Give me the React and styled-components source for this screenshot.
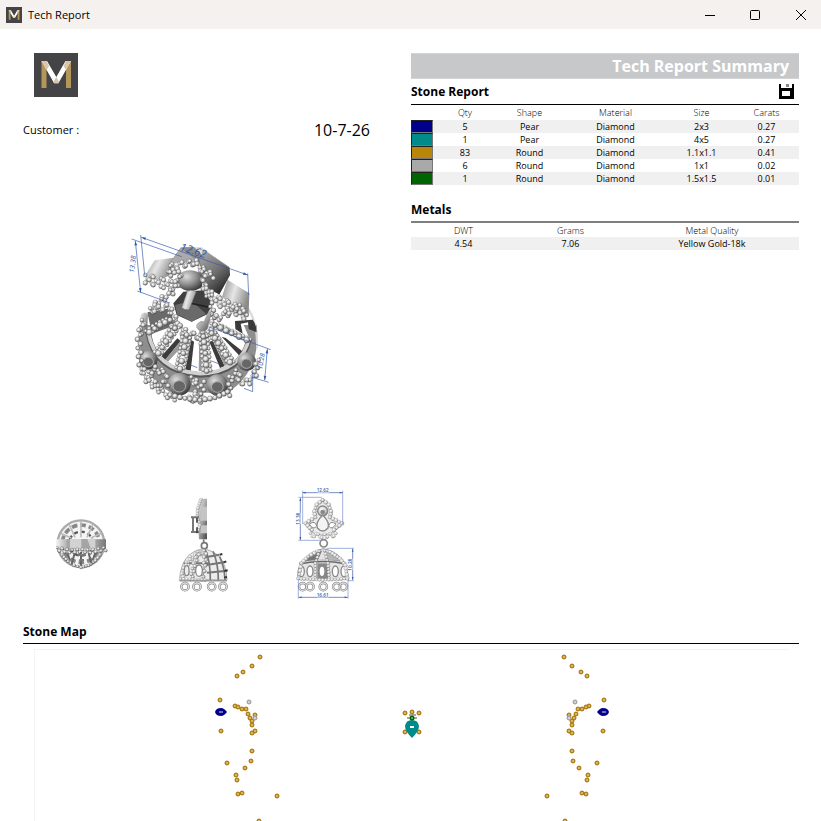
import React from 'react';
import styled, { createGlobalStyle } from 'styled-components';

const GlobalStyle = createGlobalStyle`
    * {
        box-sizing: border-box;
    }

    body {
        margin: 0;
        background: #fff;
        color: #000;
        font-family: 'Open Sans', 'Noto Sans', sans-serif;
        font-size: 11px;
    }
`;

const Window = styled.div`
    display: flex;
    flex-flow: column;
    height: 100vh;
    overflow: hidden;
`;

const TitleBar = styled.header`
    display: flex;
    align-items: center;
    flex: none;
    height: 29px;
    padding-left: 6px;
    background: #f5f1ee;
`;

const Title = styled.span`
    flex: 1;
    margin-left: 6px;
    font-size: 11px;
    line-height: 16px;
`;

const WindowButton = styled.button`
    display: flex;
    align-items: center;
    justify-content: center;
    width: 45px;
    height: 28px;
    padding: 0;
    border: 0;
    background: none;

    &:last-child {
        width: 44px;
        padding-left: 4px;
    }
`;

const Page = styled.main`
    flex: 1;
    min-height: 0;
    overflow: hidden;
    padding: 24px 22px 0 23px;
`;

const Columns = styled.div`
    display: grid;
    grid-template-columns: 1fr 1fr;
`;

const Details = styled.section`
    display: flex;
    flex-flow: column;
    padding-right: 24px;
`;

const LogoHolder = styled.div`
    display: flex;
    padding-left: 11px;
`;

const CustomerRow = styled.div`
    display: flex;
    justify-content: space-between;
    align-items: center;
    margin-top: 22px;
    padding-right: 17px;
    line-height: 22px;
`;

const OrderDate = styled.time`
    font-size: 16px;
`;

const MainView = styled.div`
    display: flex;
    justify-content: center;
    margin-top: 84px;
    padding-right: 10px;
`;

const Thumbs = styled.div`
    display: grid;
    grid-template-columns: repeat(3, 1fr);
    justify-items: center;
    margin-top: 65px;
    padding-right: 2px;
`;

const Summary = styled.section`
    display: flex;
    flex-flow: column;
`;

const Banner = styled.h1`
    margin: 0;
    padding-right: 10px;
    border: 1px solid #d3d4d6;
    border-width: 1px 0;
    background: #c7c8ca;
    color: #fff;
    font-size: 16px;
    line-height: 24px;
    text-align: right;
`;

const SectionHead = styled.div`
    display: flex;
    justify-content: space-between;
    align-items: center;
    height: ${({ $height }) => $height || 26}px;
    padding-right: 5px;
    border-bottom: ${({ $rule }) => $rule || '1px solid #000'};
`;

const Heading = styled.h2`
    margin: 0;
    font-size: 12px;
    line-height: 18px;
`;

const SaveButton = styled.button`
    display: flex;
    padding: 0;
    border: 0;
    background: none;
`;

const Table = styled.table`
    width: 100%;
    margin-bottom: ${({ $gap }) => $gap || 0}px;
    border-collapse: collapse;
    table-layout: fixed;
    font-size: 9px;
    line-height: 13px;
    text-align: center;

    th,
    td {
        height: 13px;
        padding: 0;
    }

    th {
        height: ${({ $head }) => $head || 14}px;
        font-weight: 300;
    }

    tbody tr:nth-child(odd) {
        background: #f0f0f0;
    }
`;

const Swatch = styled.div`
    height: 13px;
    border: 1px solid #222;
    border-right-color: #777;
    border-bottom-color: #777;
    background: ${({ $color }) => $color};
`;

const MapSection = styled.section`
    margin-top: 10px;
`;

const MapFrame = styled.div`
    margin: 5px 10px 0 11px;
    border: 1px solid #f4f4f4;
    border-width: 1px 0 0 1px;

    svg {
        display: block;
        width: 100%;
    }
`;

const SharedDefs = styled.svg`
    position: absolute;
    width: 0;
    height: 0;
`;

const BLUE = '#3557a8';

const stones = [
    { color: '#00008b', qty: 5, shape: 'Pear', material: 'Diamond', size: '2x3', carats: '0.27' },
    { color: '#008b8b', qty: 1, shape: 'Pear', material: 'Diamond', size: '4x5', carats: '0.27' },
    { color: '#b8860b', qty: 83, shape: 'Round', material: 'Diamond', size: '1.1x1.1', carats: '0.41' },
    { color: '#a9a9a9', qty: 6, shape: 'Round', material: 'Diamond', size: '1x1', carats: '0.02' },
    { color: '#006400', qty: 1, shape: 'Round', material: 'Diamond', size: '1.5x1.5', carats: '0.01' },
];

const metals = [{ dwt: '4.54', grams: '7.06', quality: 'Yellow Gold-18k' }];

const goldStones = [
    [225, 8], [217, 17], [208, 23], [202, 27], [185, 51], [200, 57], [203, 58], [207, 60], [211, 60],
    [213, 65], [215, 69], [220, 66], [217, 72], [217, 76], [220, 82], [217, 84], [186, 82], [217, 102],
    [216, 112], [210, 119], [192, 114], [201, 126], [202, 131], [203, 145], [207, 144], [242, 147], [224, 172],
];

const greyStones = [[214, 53], [220, 69]];

// points spread evenly along a polyline
const spread = (points, step) => {
    const out = [];
    for (let i = 0; i < points.length - 1; i++) {
        const [x1, y1] = points[i];
        const [x2, y2] = points[i + 1];
        const count = Math.max(1, Math.round(Math.hypot(x2 - x1, y2 - y1) / step));
        for (let k = 0; k < count; k++) {
            out.push([x1 + ((x2 - x1) * k) / count, y1 + ((y2 - y1) * k) / count]);
        }
    }
    out.push(points[points.length - 1]);
    return out;
};

const Beads = ({ points, r = 6, step = 12, rows = 1, fill = 'url(#bead)', edge = '#5a5a5a' }) => (
    <g fill={fill} stroke={edge} strokeWidth={r / 7}>
        {spread(points, step).map(([x, y], i) => (
            <React.Fragment key={i}>
                {Array.from({ length: rows }, (_, n) => (
                    <circle
                        key={n}
                        cx={x + ((i + n) % 2 ? r * 0.6 : -r * 0.6) * (rows > 1 ? 1 : 0)}
                        cy={y + n * r * 1.7}
                        r={(i + n) % 3 ? r : r * 0.85}
                    />
                ))}
            </React.Fragment>
        ))}
    </g>
);

const PaleBeads = (props) => <Beads fill="url(#paleBead)" edge="#999" {...props} />;

const Logo = ({ size }) => (
    <svg width={size} height={size} viewBox="0 0 44 44" role="img" aria-label="M">
        <rect width="44" height="44" fill="#444446" />
        <path d="M7.5 8h5v27h-5zM32 8h5v27h-5z" fill="#b5965a" />
        <path d="M7.5 8h5.5l9.3 16L31.500 8H37L24.500 30h-4.500z" fill="#fff" />
        <path d="M7.500 8h5l2.500 5-2.500 4zM37 8h-5l-2.500 5 2.500 4zM22.300 24l3 5-1 1.500h-4l-1-1.500z" fill="#d9c5ad" />
    </svg>
);

const Arrow = ({ x1, y1, x2, y2, size = 9 }) => {
    const angle = Math.atan2(y2 - y1, x2 - x1);
    const head = (x, y, dir) => {
        const a = angle + (dir < 0 ? Math.PI : 0);
        const bx = x - Math.cos(a) * size * 1.5;
        const by = y - Math.sin(a) * size * 1.5;
        const ox = Math.sin(a) * size * 0.45;
        const oy = Math.cos(a) * size * 0.45;
        return `M${x} ${y}L${bx + ox} ${by - oy}L${bx - ox} ${by + oy}z`;
    };
    return (
        <g>
            <path d={`M${x1} ${y1}L${x2} ${y2}`} stroke={BLUE} strokeWidth="2" />
            <path d={head(x2, y2, 1) + head(x1, y1, -1)} fill={BLUE} />
        </g>
    );
};

const Gradients = () => (
    <SharedDefs aria-hidden="true">
        <defs>
            <radialGradient id="bead" cx="0.4" cy="0.34" r="0.7">
                <stop offset="0" stopColor="#fff" />
                <stop offset="0.45" stopColor="#d2d2d2" />
                <stop offset="1" stopColor="#484848" />
            </radialGradient>
            <radialGradient id="paleBead" cx="0.4" cy="0.35" r="0.7">
                <stop offset="0" stopColor="#fff" />
                <stop offset="0.6" stopColor="#d0d0d0" />
                <stop offset="1" stopColor="#777" />
            </radialGradient>
            <radialGradient id="darkBall" cx="0.35" cy="0.3" r="0.8">
                <stop offset="0" stopColor="#ddd" />
                <stop offset="0.5" stopColor="#8c8c8c" />
                <stop offset="1" stopColor="#2a2a2a" />
            </radialGradient>
            <linearGradient id="metal" x1="0" y1="0" x2="1" y2="1">
                <stop offset="0" stopColor="#efefef" />
                <stop offset="0.5" stopColor="#a8a8a8" />
                <stop offset="1" stopColor="#444" />
            </linearGradient>
            <linearGradient id="plate" x1="0" y1="0" x2="1" y2="0.4">
                <stop offset="0" stopColor="#8a8a8a" />
                <stop offset="0.5" stopColor="#e6e6e6" />
                <stop offset="1" stopColor="#8a8a8a" />
            </linearGradient>
            <linearGradient id="shade" x1="0" y1="0" x2="0.6" y2="1">
                <stop offset="0" stopColor="#b0b0b0" />
                <stop offset="0.6" stopColor="#707070" />
                <stop offset="1" stopColor="#2c2c2c" />
            </linearGradient>
            <linearGradient id="band" x1="0" y1="0" x2="1" y2="0">
                <stop offset="0" stopColor="#f5f5f5" />
                <stop offset="0.3" stopColor="#999" />
                <stop offset="0.6" stopColor="#ccc" />
                <stop offset="1" stopColor="#777" />
            </linearGradient>
        </defs>
    </SharedDefs>
);

const spokes = [
    [[150, 285], [120, 300], [88, 322]],
    [[165, 310], [138, 350], [115, 385]],
    [[200, 330], [190, 385], [180, 432]],
    [[250, 335], [256, 385], [260, 438]],
    [[275, 325], [305, 370], [330, 412]],
    [[285, 300], [335, 325], [380, 345]],
];

const PerspectiveView = () => (
    <svg width="160" height="190" viewBox="0 0 480 570" fill="none" role="img" aria-label="Perspective view">
        <path d="M58 300Q48 450 150 500L320 505Q425 440 410 300z" fill="#8e8e8e" />
        <path d="M84 335Q110 445 240 452Q360 448 388 340L350 250L110 250z" fill="#fff" />
        <path d="M384 250Q412 290 411 370" stroke="#d8d8d8" strokeWidth="6" />
        <path d="M345 288L398 284Q410 300 410 322L386 312L384 292L362 296L368 326L346 312z" fill="#3a3a3a" />
        <path d="M82 262l70-12 10 52-66 24z" fill="#6a6a6a" />
        <path d="M62 270q14-15 22 0l-4 60q-25-20-18-60z" fill="url(#metal)" />

        <g fill="#3c3c3c">
            <path d="M172 340l10 8-46 56-12-10z" />
            <path d="M214 345l8 5-10 88-16-4z" />
            <path d="M268 350l10-3 36 76-14 6z" />
            <path d="M305 335l12 4 50 40-8 14z" />
        </g>
        <g fill="#9a9a9a">
            <path d="M182 348l-46 56 8 6 46-50z" />
            <path d="M238 348h7v90h-9z" />
            <path d="M280 347l34 76 10-6z" />
        </g>
        <path d="M85 325Q105 440 240 450Q365 445 388 340" stroke="#585858" strokeWidth="16" />
        <path d="M85 322Q105 436 240 446Q365 441 388 337" stroke="#d0d0d0" strokeWidth="11" />

        <path d="M75 152L104 106L160 98L150 150L120 165z" fill="url(#plate)" />
        <path d="M148 116L182 68L240 66L328 126L330 150L298 208L262 190L236 108z" fill="#777" />
        <path d="M148 116L182 68L222 66L236 108z" fill="#aaa" />
        <path d="M182 68L222 66L262 106L232 108z" fill="#8c8c8c" />
        <path d="M222 66L244 66L328 128L262 106z" fill="#e0e0e0" />
        <path d="M248 72L328 128L330 150L298 208L262 190L240 112z" fill="url(#shade)" />
        <path d="M322 164L388 205L386 268L370 275L306 215z" fill="url(#plate)" />

        <path d="M160 235L190 200L250 196L278 238L262 268L215 290L170 270z" fill="#404040" />
        <path d="M165 240L215 228L258 266L215 290L172 268z" fill="#6a6a6a" />
        <path d="M200 232L264 246" stroke="#222" strokeWidth="5" />
        <path d="M172 150q36-28 78 0l-4 36q-40 26-72-4z" fill="url(#darkBall)" />
        <path d="M202 198q14-6 27 2l-22 54q-12 2-22-6z" fill="url(#plate)" stroke="#555" />

        <Beads points={[[80, 150], [104, 156], [135, 165], [160, 170]]} rows={3} r={7} step={13} />
        <Beads points={[[148, 140], [160, 118], [190, 112], [225, 106], [246, 126], [276, 148]]} rows={2} r={7} step={13} />
        <Beads points={[[155, 122], [180, 140], [170, 170], [155, 195], [130, 215], [100, 240]]} rows={2} r={7} step={13} />
        <Beads points={[[250, 140], [255, 180], [280, 210], [330, 232], [376, 258]]} rows={3} r={7} step={13} />
        <Beads points={[[95, 250], [145, 240], [158, 265], [170, 285]]} rows={2} r={7} step={13} />
        <Beads points={[[275, 245], [280, 278], [320, 260], [355, 240]]} rows={2} r={7} step={13} />
        <Beads points={[[150, 290], [185, 302], [200, 325], [240, 325], [280, 312]]} rows={2} r={8} step={15} />
        {spokes.map((points, i) => (
            <g key={i}>
                <Beads points={points.map(([x, y]) => [x - 11, y - 4])} r={6} step={12} />
                <Beads points={points.map(([x, y]) => [x + 11, y - 2])} r={6} step={12} />
                <Beads points={points} r={9} step={20} />
            </g>
        ))}
        <path d="M230 300q8-14 22-10l14-32 8 6-12 48q-18 16-32-4z" fill="url(#metal)" stroke="#666" />

        {[[85, 405, 28], [178, 478, 34], [292, 480, 32], [380, 410, 28]].map(([x, y, r]) => (
            <g key={x}>
                <ellipse cx={x} cy={y} rx={r} ry={r} fill="url(#darkBall)" />
                <ellipse cx={x} cy={y + 6} rx={r * 0.55} ry={r * 0.5} fill="#666" stroke="#aaa" strokeWidth="3" />
            </g>
        ))}
        <Beads points={[[70, 285], [56, 330], [58, 370], [62, 420], [82, 458], [120, 490], [160, 514]]} rows={2} r={7} step={14} />
        <Beads points={[[90, 440], [110, 425], [134, 440], [140, 470], [110, 470]]} rows={2} r={7} step={14} />
        <Beads points={[[218, 456], [232, 474], [230, 500], [212, 515], [246, 520], [248, 470]]} rows={2} r={7} step={13} />
        <Beads points={[[150, 510], [195, 520], [240, 526], [285, 518], [325, 500]]} r={8} step={15} />
        <Beads points={[[325, 500], [332, 455], [352, 435], [360, 465], [385, 465], [405, 440], [412, 405]]} rows={2} r={7} step={13} />

        <g stroke={BLUE} strokeWidth="2">
            <path d="M62 30L74 150M383 145L386 210M35 42L185 95M52 198L150 234" />
            <path d="M265 305L452 374M212 420l20 8M275 408l20 8M372 490L398 500V440M400 458L446 472" />
        </g>
        <Arrow x1={64} y1={37} x2={383} y2={150} />
        <Arrow x1={46} y1={48} x2={62} y2={203} />
        <Arrow x1={442} y1={372} x2={434} y2={466} />
        <g fill={BLUE} fontStyle="italic">
            <text transform="translate(178 76) rotate(17)" fontSize="33">12.62</text>
            <text transform="translate(42 144) rotate(-83)" fontSize="21">13.38</text>
            <text transform="translate(426 434) rotate(-80)" fontSize="20">10.28</text>
        </g>
    </svg>
);

const TopView = () => (
    <svg width="54" height="130" viewBox="6 0 162 390" fill="none" role="img" aria-label="Top view">
        <circle cx="81" cy="191" r="70" fill="#f4f4f4" stroke="#aaa" strokeWidth="7" />
        <circle cx="81" cy="191" r="56" stroke="#888" strokeWidth="11" strokeDasharray="17 9" />
        <circle cx="81" cy="191" r="36" stroke="#555" strokeWidth="7" strokeDasharray="12 9" />
        <path d="M81 122v50M45 132l18 40M117 132l-18 40M20 160l32 14M142 160l-32 14" stroke="#bbb" strokeWidth="5" />
        <path d="M6 178h150v28H6z" fill="url(#band)" />
        <path d="M38 177h86v28H38z" fill="#a5a5a5" />
        <path d="M48 177h34v28H48zM100 177h24v28h-14z" fill="#d2d2d2" />
        <Beads points={[[12, 203], [50, 210], [81, 208], [112, 210], [152, 203]]} r={5} step={8} rows={2} />
        <Beads points={[[24, 225], [42, 244], [60, 256], [81, 262], [104, 256], [124, 242], [138, 225]]} r={5} step={9} />
        <path d="M81 216v41M62 220l-9 32M104 220l8 30M40 220l8 21M124 220l-8 20" stroke="#666" strokeWidth="6" />
        <path d="M70 225h24M76 240h14" stroke="#777" strokeWidth="6" />
    </svg>
);

const Rings = ({ xs, y }) => (
    <g>
        {xs.map(x => (
            <g key={x}>
                <circle cx={x} cy={y} r="11" stroke="#777" strokeWidth="7" />
                <circle cx={x} cy={y} r="11" stroke="#ddd" strokeWidth="4" />
            </g>
        ))}
    </g>
);

const SideView = () => (
    <svg width="54" height="130" viewBox="0 0 162 390" fill="none" role="img" aria-label="Side view">
        <path d="M68 56h22v122H66l-4-55q-2-46 6-67z" fill="url(#metal)" />
        <path d="M72 80h18v42H70zM72 136h18v24H70z" fill="#c4c4c4" />
        <PaleBeads points={[[72, 58], [62, 85], [60, 110], [68, 135], [64, 150]]} r={5} step={8} />
        <path d="M42 112h24M42 156h24M48 114v40" stroke="#777" strokeWidth="6" />
        <path d="M60 114v14M60 142v18" stroke="#444" strokeWidth="5" />
        <path d="M80 178v10" stroke="#777" strokeWidth="5" />
        <circle cx="82" cy="197" r="9" stroke="#777" strokeWidth="5" />
        <path d="M8 300Q12 220 74 207Q146 212 150 300z" fill="#ececec" stroke="#aaa" strokeWidth="3" />
        <path d="M85 210Q100 240 100 300M108 214Q124 250 124 300M128 230Q142 260 144 300" stroke="#777" strokeWidth="5" />
        <path d="M85 232l42-8M88 255l54-8M90 278l60-6M20 250h76" stroke="#777" strokeWidth="6" />
        <path d="M128 224l8-2M140 247l8-3M142 273l10-2M142 292h8" stroke="#333" strokeWidth="6" />
        <PaleBeads points={[[72, 212], [42, 230], [24, 255], [14, 290]]} r={5} step={9} rows={2} />
        <PaleBeads points={[[66, 215], [52, 250], [44, 290]]} r={5} step={9} rows={2} edge="#666" />
        <PaleBeads points={[[84, 212], [84, 240], [76, 290]]} r={5} step={9} rows={2} edge="#666" />
        <PaleBeads points={[[10, 297], [84, 300]]} r={5} step={9} />
        <ellipse cx="66" cy="272" rx="10" ry="17" fill="#fff" stroke="#888" strokeWidth="4" />
        <ellipse cx="29" cy="272" rx="7" ry="15" fill="#eee" stroke="#888" strokeWidth="4" />
        <path d="M8 302h142" stroke="#999" strokeWidth="5" />
        <Rings xs={[24, 60, 104, 138]} y={320} />
    </svg>
);

const FrontView = () => (
    <svg width="90" height="130" viewBox="0 0 270 390" fill="none" role="img" aria-label="Front view">
        <path
            d="M75 130L104 116Q96 70 128 60Q160 70 152 116L188 130L160 158L128 166L96 158z"
            fill="#ececec"
            stroke="#aaa"
            strokeWidth="3"
        />
        <PaleBeads points={[[128, 60], [110, 74], [103, 94], [106, 112], [76, 130], [96, 150]]} r={6} step={11} edge="#777" />
        <PaleBeads points={[[128, 60], [146, 74], [153, 94], [150, 112], [186, 130], [162, 150]]} r={6} step={11} edge="#777" />
        <PaleBeads points={[[94, 160], [128, 164], [164, 160]]} rows={2} r={5} step={10} />
        <circle cx="128" cy="93" r="15" fill="url(#paleBead)" stroke="#888" strokeWidth="4" />
        <circle cx="128" cy="96" r="7" fill="#888" />
        <path d="M128 106q22 20 16 38q-16 18-32 0q-6-18 16-38z" fill="#f4f4f4" stroke="#888" strokeWidth="4" />
        <path d="M88 132q18-12 22 6q-10 14-22-6M168 132q-18-12-22 6q10 14 22-6" fill="#fff" stroke="#888" strokeWidth="3" />
        <circle cx="131" cy="190" r="11" stroke="#888" strokeWidth="5" />
        <path d="M52 298Q54 222 130 206Q202 220 204 298z" fill="#e4e4e4" stroke="#999" strokeWidth="3" />
        <path d="M66 246Q90 214 126 212L110 248z" fill="#777" />
        <path d="M130 212Q165 216 184 246h-40z" fill="#b5b5b5" />
        <path d="M112 300h32v-50h-32z" fill="#888" />
        <path d="M58 250Q130 236 198 250" stroke="#666" strokeWidth="8" />
        <path d="M58 248Q130 234 198 248" stroke="#d2d2d2" strokeWidth="3" />
        {[64, 90, 126, 166, 192].map(x => (
            <ellipse key={x} cx={x} cy="274" rx="9" ry="16" fill="#fff" stroke="#888" strokeWidth="4" />
        ))}
        <PaleBeads points={[[112, 214], [84, 230], [64, 250], [56, 294]]} r={6} step={10} />
        <PaleBeads points={[[118, 214], [106, 250], [106, 294]]} r={5} step={9} edge="#666" />
        <PaleBeads points={[[134, 212], [144, 250], [147, 294]]} r={5} step={9} edge="#666" />
        <PaleBeads points={[[150, 216], [180, 236], [196, 256], [202, 294]]} r={6} step={10} />
        <PaleBeads points={[[54, 296], [128, 300], [202, 296]]} r={5} step={9} />
        <Rings xs={[68, 90, 130, 170, 190]} y={320} />
        <g stroke="#6f8bc8" strokeWidth="2">
            <path d="M68 32v100M188 32v100M55 52h70M55 181h68M140 205h82M204 302h18M55 300v56M204 300v56" />
        </g>
        <Arrow x1={68} y1={38} x2={188} y2={38} size={6} />
        <Arrow x1={61} y1={54} x2={61} y2={180} size={6} />
        <Arrow x1={218} y1={206} x2={218} y2={300} size={6} />
        <Arrow x1={56} y1={352} x2={203} y2={352} size={6} />
        <g fill={BLUE} fontSize="14" fontWeight="600" stroke="#fff" strokeWidth="3" paintOrder="stroke">
            <text x="110" y="36">12.62</text>
            <text x="110" y="350">16.61</text>
            <text transform="translate(59 134) rotate(-90)">13.38</text>
            <text transform="translate(216 272) rotate(-90)">10.28</text>
        </g>
    </svg>
);

const Stone = ({ x, y, color, edge }) => (
    <g>
        <circle cx={x} cy={y} r="2" fill={color} stroke={edge} strokeWidth="1" />
        <path d={`M${x - 1} ${y}h2`} stroke="#fff" strokeOpacity="0.7" strokeWidth="1" />
    </g>
);

const StoneHalf = ({ place }) => (
    <g>
        {goldStones.map(([x, y]) => (
            <Stone key={`${x}-${y}`} x={place(x)} y={y} color="#c08a18" edge="#a87508" />
        ))}
        {greyStones.map(([x, y]) => (
            <Stone key={`${x}-${y}`} x={place(x)} y={y} color="#bbb" edge="#999" />
        ))}
    </g>
);

const StoneMap = () => (
    <svg viewBox="0 1 754 340" role="img" aria-label="Stone map">
        <StoneHalf place={x => x} />
        <StoneHalf place={x => 754 - x} />
        <path d="M180 63q1-4 6-4q3 0 6 4q-3 4-6 4q-5 0-6-4z" fill="#00008b" />
        <path d="M574 63q-1-4-6-4q-3 0-6 4q3 4 6 4q5 0 6-4z" fill="#00008b" />
        <path d="M184 63h4M567 63h4" stroke="#dde" />
        <path d="M374 66h7M372 69h10" stroke="#aaa" strokeWidth="2" />
        {[[370, 64], [377, 63], [384, 64], [370, 83], [384, 83]].map(([x, y]) => (
            <Stone key={`${x}-${y}`} x={x} y={y} color="#c08a18" edge="#a87508" />
        ))}
        <path d="M377 89Q370 82 370 77Q371 71 377 71Q383 71 384 77Q384 82 377 89z" fill="#008b8b" />
        <path d="M375 78h4" stroke="#fff" strokeWidth="2" />
        <circle cx="377" cy="69" r="2.500" fill="#006400" />
        <path d="M376 69h2" stroke="#cdc" />
    </svg>
);

const App = () => {
    return (
        <Window>
            <GlobalStyle />
            <Gradients />
            <TitleBar>
                <Logo size={16} />
                <Title>Tech Report</Title>
                <WindowButton aria-label="Minimize">
                    <svg width="12" height="12" viewBox="0 0 12 12"><path d="M1 6.500h10" stroke="#000" /></svg>
                </WindowButton>
                <WindowButton aria-label="Maximize">
                    <svg width="12" height="12" viewBox="0 0 12 12"><rect x="1.500" y="1.500" width="9" height="9" rx="1" fill="none" stroke="#000" /></svg>
                </WindowButton>
                <WindowButton aria-label="Close">
                    <svg width="12" height="12" viewBox="0 0 12 12"><path d="M1 1l10 10M11 1L1 11" stroke="#000" /></svg>
                </WindowButton>
            </TitleBar>
            <Page>
                <Columns>
                    <Details>
                        <LogoHolder><Logo size={44} /></LogoHolder>
                        <CustomerRow>
                            <span>Customer :</span>
                            <OrderDate>10-7-26</OrderDate>
                        </CustomerRow>
                        <MainView><PerspectiveView /></MainView>
                        <Thumbs>
                            <TopView />
                            <SideView />
                            <FrontView />
                        </Thumbs>
                    </Details>
                    <Summary>
                        <Banner>Tech Report Summary</Banner>
                        <SectionHead>
                            <Heading>Stone Report</Heading>
                            <SaveButton aria-label="Save">
                                <svg width="15" height="15" viewBox="0 0 15 15">
                                    <path d="M0 0h2v4h11V0h2v15H0zM3 7v5h8V7z" fillRule="evenodd" />
                                    <path d="M7 0h3v3H7z" fill="#888" />
                                </svg>
                            </SaveButton>
                        </SectionHead>
                        <Table $head={15} $gap={14}>
                            <colgroup>
                                {[22, 64, 65, 107, 65, 65].map((width, i) => <col key={i} width={width} />)}
                            </colgroup>
                            <thead>
                                <tr>
                                    <th aria-label="Color" />
                                    <th>Qty</th>
                                    <th>Shape</th>
                                    <th>Material</th>
                                    <th>Size</th>
                                    <th>Carats</th>
                                </tr>
                            </thead>
                            <tbody>
                                {stones.map(stone => (
                                    <tr key={stone.color}>
                                        <td><Swatch $color={stone.color} /></td>
                                        <td>{stone.qty}</td>
                                        <td>{stone.shape}</td>
                                        <td>{stone.material}</td>
                                        <td>{stone.size}</td>
                                        <td>{stone.carats}</td>
                                    </tr>
                                ))}
                            </tbody>
                        </Table>
                        <SectionHead $height={24} $rule="2px solid #7f7f7f">
                            <Heading>Metals</Heading>
                        </SectionHead>
                        <Table>
                            <colgroup>
                                {[105, 109, 174].map((width, i) => <col key={i} width={width} />)}
                            </colgroup>
                            <thead>
                                <tr>
                                    <th>DWT</th>
                                    <th>Grams</th>
                                    <th>Metal Quality</th>
                                </tr>
                            </thead>
                            <tbody>
                                {metals.map(metal => (
                                    <tr key={metal.quality}>
                                        <td>{metal.dwt}</td>
                                        <td>{metal.grams}</td>
                                        <td>{metal.quality}</td>
                                    </tr>
                                ))}
                            </tbody>
                        </Table>
                    </Summary>
                </Columns>
                <MapSection>
                    <SectionHead $height={24}>
                        <Heading>Stone Map</Heading>
                    </SectionHead>
                    <MapFrame><StoneMap /></MapFrame>
                </MapSection>
            </Page>
        </Window>
    );
};

export default App;
